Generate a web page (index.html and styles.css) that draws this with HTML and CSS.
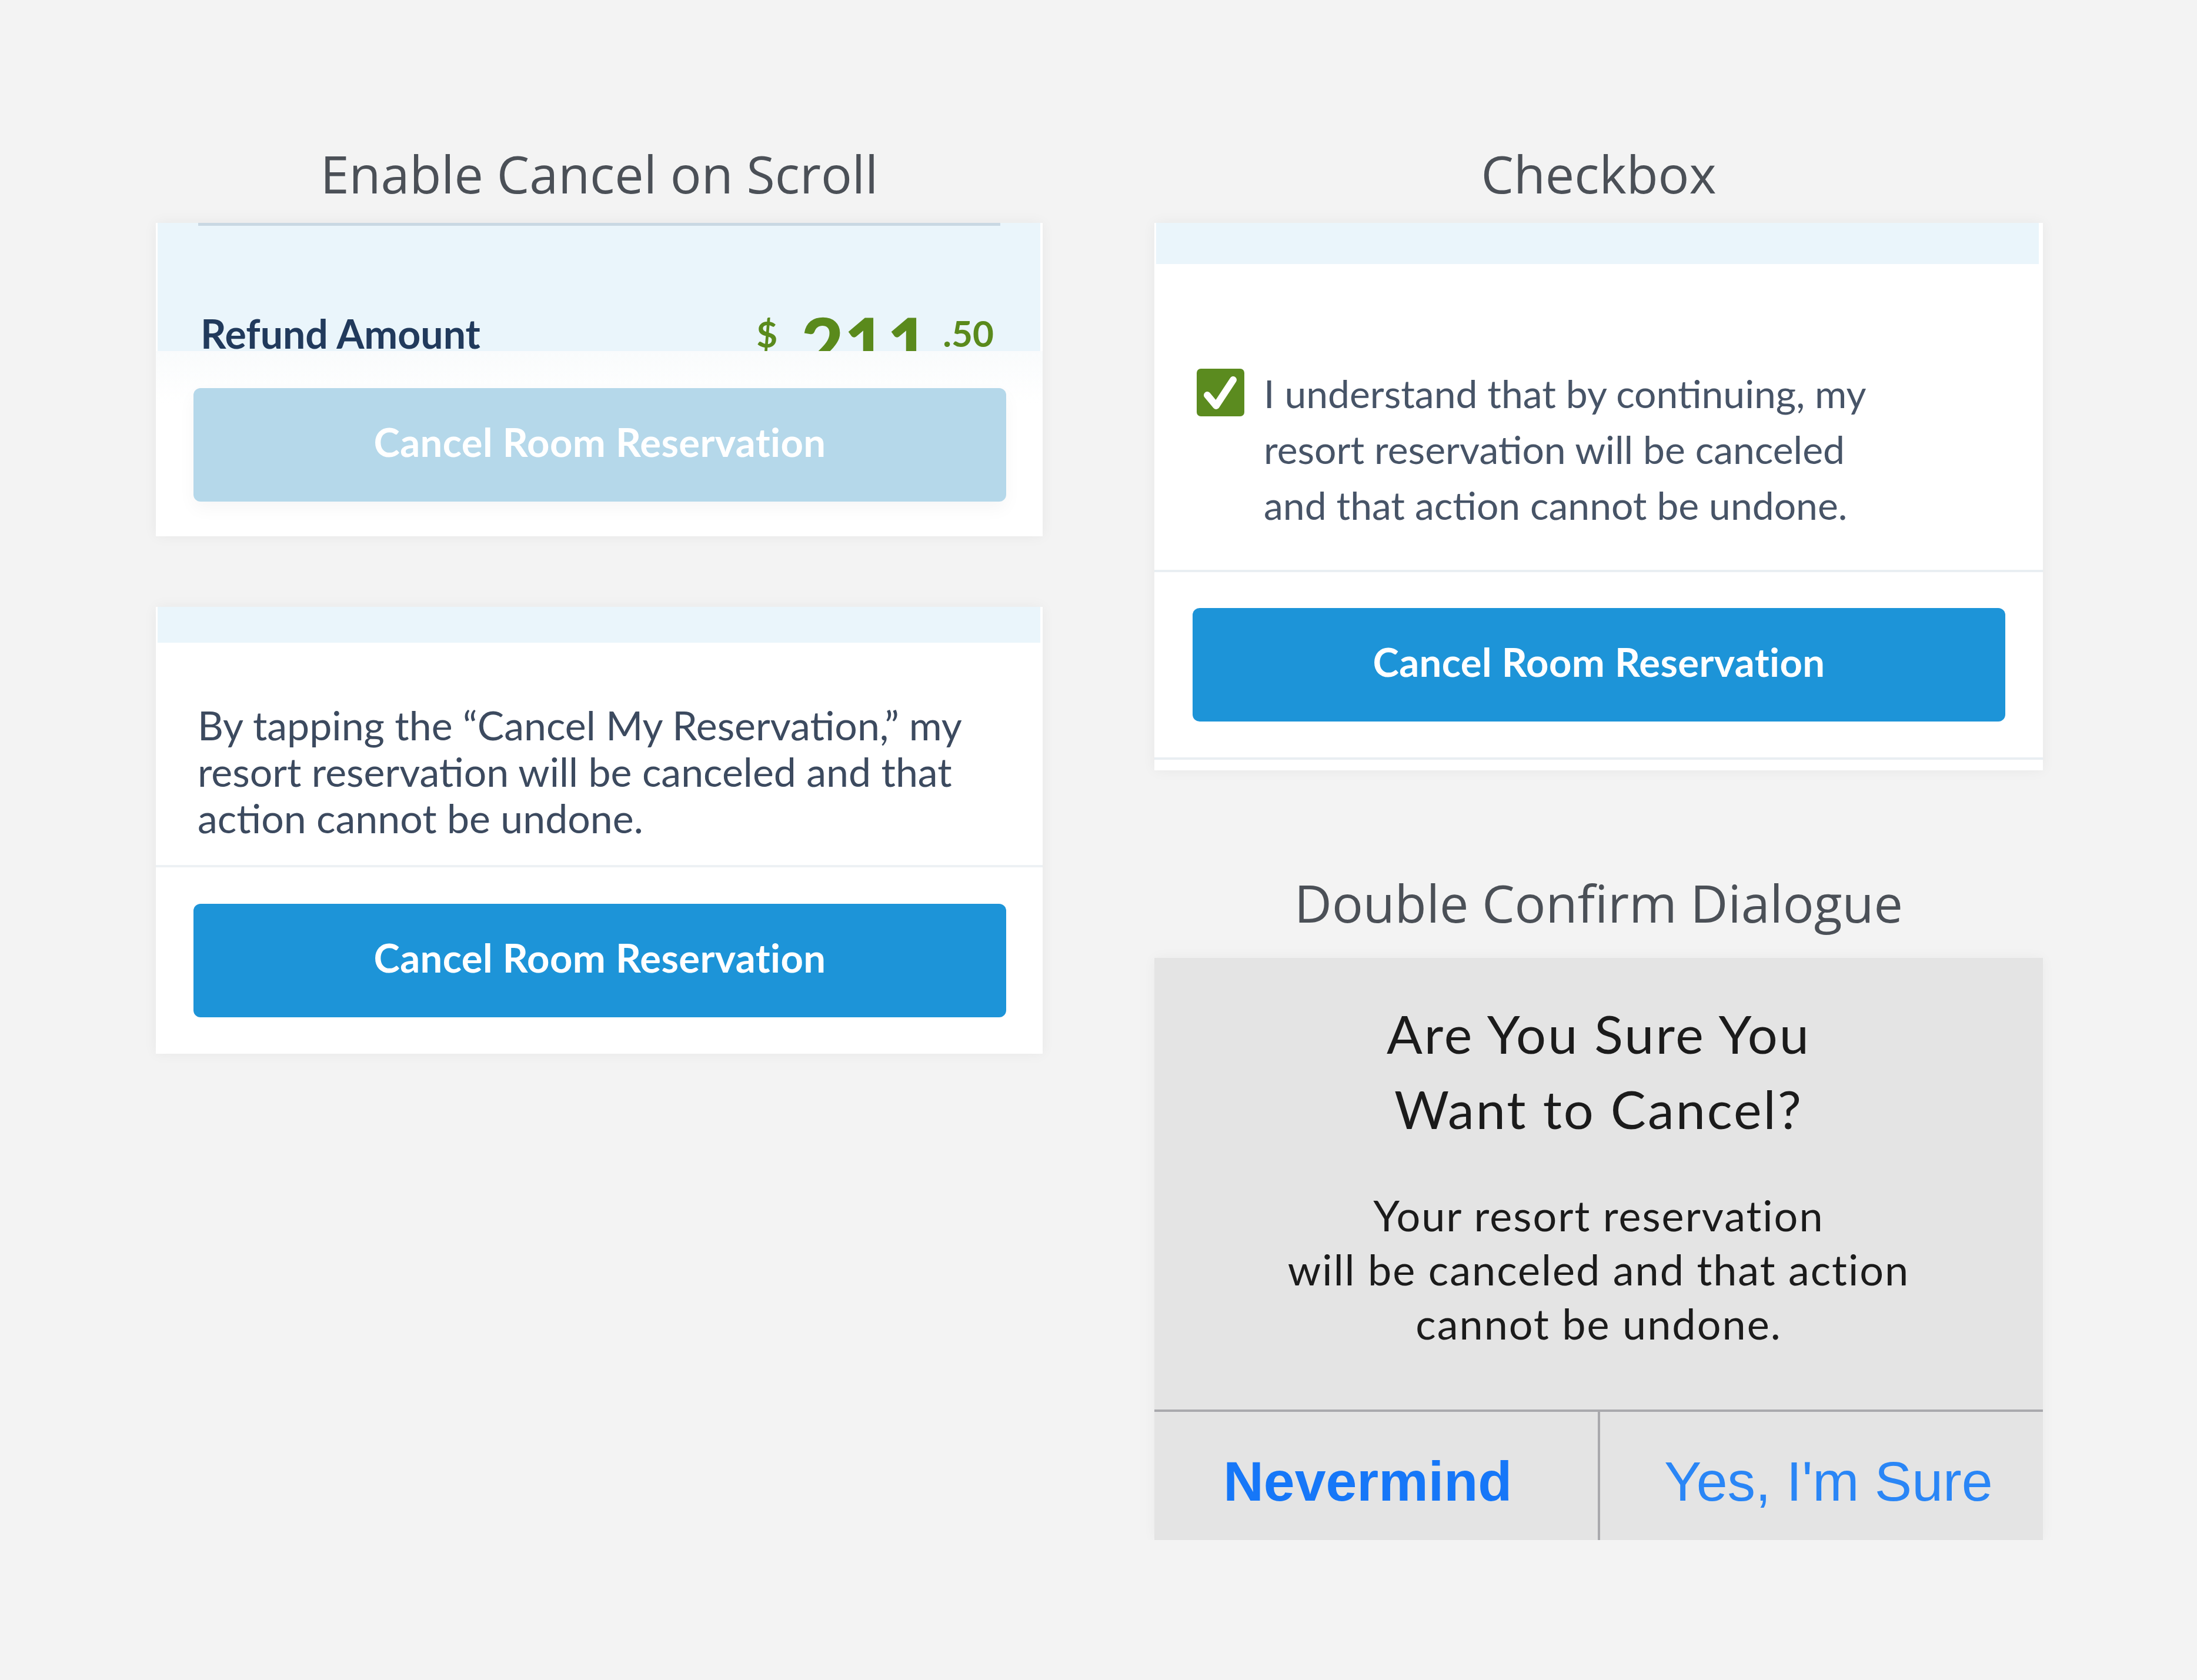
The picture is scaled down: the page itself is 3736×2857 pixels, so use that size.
FILE: index.html
```html
<!DOCTYPE html>
<html lang="en">
<head>
<meta charset="utf-8">
<title>Cancel Reservation Patterns</title>
<link rel="stylesheet" href="styles.css">
</head>
<body>
<main class="board">
  <section class="col">
    <h2 class="section-title">Enable Cancel on Scroll</h2>
    <div class="card card--scroll">
      <div class="scroll-area">
        <div class="scroll-rule"></div>
        <div class="refund-row">
          <span class="refund-label">Refund Amount</span>
          <span class="refund-amount">
            <span class="amt-dollar">$</span>
            <span class="amt-whole">211</span>
            <span class="amt-cents">.50</span>
          </span>
        </div>
      </div>
      <div class="sticky-footer">
        <button class="btn btn--disabled" type="button">Cancel Room Reservation</button>
      </div>
    </div>

    <div class="card card--notice">
      <div class="strip"></div>
      <p class="notice-text">By tapping the “Cancel My Reservation,” my<br>resort reservation will be canceled and that<br>action cannot be undone.</p>
      <div class="footer">
        <button class="btn" type="button">Cancel Room Reservation</button>
      </div>
    </div>
  </section>

  <section class="col">
    <h2 class="section-title">Checkbox</h2>
    <div class="card card--checkbox">
      <div class="strip strip--tall"></div>
      <div class="check-row">
        <span class="checkbox">
          <svg viewBox="0 0 81 81" width="81" height="81" aria-hidden="true">
            <rect x="0" y="0" width="81" height="81" rx="7" fill="#5b8b1f"/>
            <path d="M18 45 L33 63 L62 19" fill="none" stroke="#fff" stroke-width="12" stroke-linecap="round" stroke-linejoin="round"/>
          </svg>
        </span>
        <p class="check-text">I understand that by continuing, my<br>resort reservation will be canceled<br>and that action cannot be undone.</p>
      </div>
      <div class="footer footer--checkbox">
        <button class="btn" type="button">Cancel Room Reservation</button>
      </div>
      <div class="card-tail"></div>
    </div>

    <h2 class="section-title section-title--dialog">Double Confirm Dialogue</h2>
    <div class="dialog">
      <div class="dialog-body">
        <h3 class="dialog-title">Are You Sure You<br>Want to Cancel?</h3>
        <p class="dialog-text">Your resort reservation<br>will be canceled and that action<br>cannot be undone.</p>
      </div>
      <div class="dialog-actions">
        <button class="dialog-btn dialog-btn--bold" type="button">Nevermind</button>
        <button class="dialog-btn" type="button">Yes, I'm Sure</button>
      </div>
    </div>
  </section>
</main>
</body>
</html>
```

FILE: styles.css
```css
html, body {
  margin: 0;
  padding: 0;
  background: #f3f3f3;
}

.board {
  display: grid;
  grid-template-columns: 1508px 1511px;
  column-gap: 190px;
  padding: 251px 0 0 265px;
  align-items: start;
}

.col {
  display: flex;
  flex-direction: column;
}

.section-title {
  margin: 0 0 40px;
  font-family: "Open Sans", sans-serif;
  font-weight: 400;
  font-size: 88px;
  line-height: 88px;
  color: #4b5057;
  text-align: center;
}

.section-title--dialog {
  margin: 181px 0 50px;
}

.card {
  background: #ffffff;
  box-shadow: 0 0 22px rgba(0, 0, 0, 0.05);
  font-family: Lato, "Noto Sans", sans-serif;
}

/* ---- card 1 : scroll ---- */
.card--scroll {
  height: 533px;
  display: flex;
  flex-direction: column;
}

.scroll-area {
  height: 218px;
  margin: 0 4px 0 3px;
  background: #eaf5fb;
  overflow: hidden;
  flex: none;
}

.scroll-rule {
  height: 5px;
  margin: 0 68px 0 69px;
  background: #c9d8e3;
}

.refund-row {
  display: flex;
  justify-content: space-between;
  align-items: flex-start;
  padding: 137px 79px 0 73px;
}

.refund-label {
  margin-top: 12px;
  font-weight: 700;
  font-size: 68px;
  line-height: 68px;
  color: #213a5c;
}

.refund-amount {
  display: flex;
  align-items: flex-start;
  color: #5a8a1c;
  font-weight: 700;
}

.amt-dollar {
  margin-top: 15px;
  font-size: 62px;
  line-height: 62px;
}

.amt-whole {
  margin-left: 40px;
  font-size: 126px;
  line-height: 126px;
  font-weight: 900;
}

.amt-cents {
  margin-left: 22px;
  margin-top: 14px;
  font-size: 62px;
  line-height: 62px;
}

.sticky-footer {
  flex: 1;
  padding: 63px 62px 0 64px;
  background: linear-gradient(#f9fbfc, #ffffff 90px);
}

/* ---- buttons ---- */
.btn {
  display: block;
  width: 100%;
  height: 193px;
  border: 0;
  border-radius: 12px;
  background: #1d94d8;
  color: #ffffff;
  font-family: Lato, "Noto Sans", sans-serif;
  font-weight: 700;
  font-size: 67px;
  letter-spacing: 0.4px;
  padding: 0 0 12px;
}

.btn--disabled {
  background: #b5d8ea;
  box-shadow: 0 12px 30px rgba(0, 0, 0, 0.04);
}

/* ---- card 2 : notice ---- */
.card--notice {
  margin-top: 120px;
  height: 760px;
  display: flex;
  flex-direction: column;
}

.strip {
  height: 61px;
  margin: 0 4px 0 3px;
  background: #eaf5fb;
  flex: none;
}

.strip--tall {
  height: 70px;
  margin: 0 7px 0 3px;
}

.notice-text {
  margin: 0;
  padding: 100px 40px 41px 71px;
  font-size: 68px;
  line-height: 79px;
  color: #3c4a5f;
  border-bottom: 4px solid #edf1f4;
}

.footer {
  padding: 62px 62px 0 64px;
}

/* ---- checkbox card ---- */
.check-row {
  display: flex;
  align-items: flex-start;
  padding: 172px 40px 63px 72px;
  border-bottom: 4px solid #e9eef2;
}

.card--checkbox {
  height: 931px;
  display: flex;
  flex-direction: column;
}

.checkbox {
  flex: none;
  width: 81px;
  height: 81px;
  margin-top: 6px;
  margin-right: 33px;
}

.checkbox svg {
  display: block;
}

.check-text {
  margin: 0;
  font-size: 66px;
  line-height: 95px;
  color: #475467;
}

.footer--checkbox {
  padding: 61px 64px 61px 65px;
  border-bottom: 4px solid #e9eef2;
}

.card-tail {
  flex: 1;
}

/* ---- dialog ---- */
.dialog {
  height: 990px;
  background: #e4e4e4;
  box-shadow: 0 0 22px rgba(0, 0, 0, 0.04);
  display: flex;
  flex-direction: column;
  font-family: Lato, "Noto Sans", sans-serif;
}

.dialog-body {
  flex: 1;
  text-align: center;
  color: #1b1b1b;
  border-bottom: 4px solid #a9a9ad;
}

.dialog-title {
  margin: 0;
  padding-top: 64px;
  font-weight: 400;
  font-size: 90px;
  letter-spacing: 3px;
  line-height: 128px;
}

.dialog-text {
  margin: 71px 0 0;
  font-size: 72px;
  letter-spacing: 2px;
  line-height: 92px;
}

.dialog-actions {
  height: 218px;
  display: grid;
  grid-template-columns: 1fr 4px 1fr;
}

.dialog-actions::before {
  content: "";
  grid-column: 2;
  grid-row: 1;
  background: #a9a9ad;
}

.dialog-btn {
  grid-row: 1;
  grid-column: 3;
  border: 0;
  background: transparent;
  padding: 19px 0 0 24px;
  font-family: "Liberation Sans", Arial, sans-serif;
  font-size: 95px;
  font-weight: 400;
  color: #2a86f6;
}

.dialog-btn--bold {
  grid-column: 1;
  padding: 19px 28px 0 0;
  font-weight: 700;
  color: #1677f8;
}
```
